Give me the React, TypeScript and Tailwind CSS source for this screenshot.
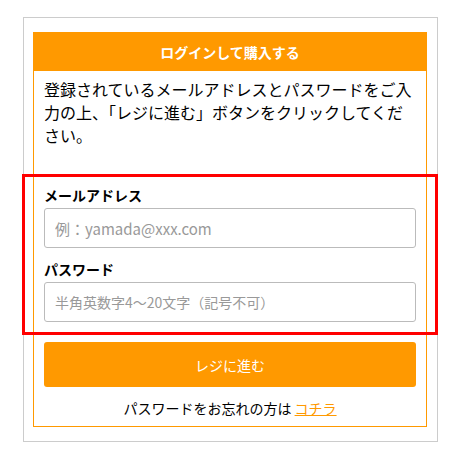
import React from "react";

export default function App() {
  return (
    <div
      className="relative w-[462px] h-[469px] bg-white"
      style={{ fontFamily: '"Noto Sans CJK JP", "Noto Sans", sans-serif' }}
    >
      <div className="absolute left-[23px] top-[17px] w-[415px] h-[425px] border border-[#cccccc] pt-[14px] pl-[9px]">
        <div className="w-[394px] border border-[#ff9900] bg-white">
          <div className="h-[38px] bg-[#ff9900] flex items-center justify-center text-white text-[14px] font-bold leading-none">
            ログインして購入する
          </div>
          <div className="px-[10px] pt-[7px] pb-[8px]">
            <p className="text-[16px] leading-[23px] text-black">
              登録されているメールアドレスとパスワードをご入力の上、「レジに進む」ボタンをクリックしてください。
            </p>
            <div className="mt-[38px]">
              <div className="text-[14px] font-bold leading-[20px] text-black">メールアドレス</div>
              <input
                type="text"
                placeholder="例：yamada@xxx.com"
                className="mt-[3px] block w-full h-[40px] border border-[#bbbbbb] rounded-[3px] px-[10px] text-[15px] placeholder:text-[#999999] outline-none"
              />
              <div className="mt-[11px] text-[14px] font-bold leading-[20px] text-black">パスワード</div>
              <input
                type="password"
                placeholder="半角英数字4～20文字（記号不可）"
                className="mt-[3px] block w-full h-[40px] border border-[#bbbbbb] rounded-[3px] px-[10px] text-[14px] placeholder:text-[#999999] outline-none"
              />
            </div>
            <button className="mt-[20px] w-full h-[45px] bg-[#ff9900] rounded-[3px] text-white text-[14px] leading-none flex items-center justify-center">
              レジに進む
            </button>
            <div className="mt-[11px] text-center text-[14px] leading-[20px] text-black">
              パスワードをお忘れの方は <a className="text-[#ff9900] underline">コチラ</a>
            </div>
          </div>
        </div>
      </div>
      <div className="absolute left-[22px] top-[174px] w-[416px] h-[161px] border-[3px] border-[#ff0000] pointer-events-none" />
    </div>
  );
}
